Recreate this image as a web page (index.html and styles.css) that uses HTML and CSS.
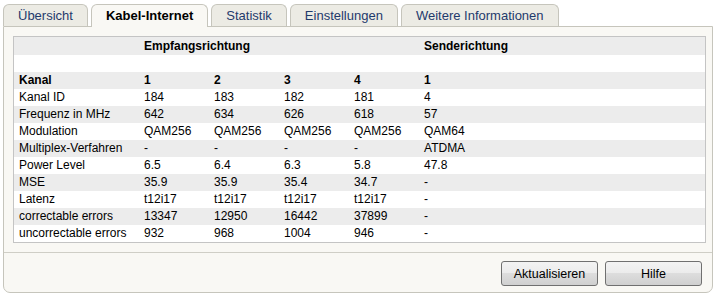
FILE: index.html
```html
<!DOCTYPE html>
<html lang="de">
<head>
  <meta charset="UTF-8" />
  <title>Kabel-Internet</title>
  <link rel="stylesheet" href="styles.css">
</head>
<body>

<div class="tabs">
  <a class="tab" href="#uebersicht">Übersicht</a>
  <a class="tab active" href="#kabel">Kabel-Internet</a>
  <a class="tab" href="#statistik">Statistik</a>
  <a class="tab" href="#einstellungen">Einstellungen</a>
  <a class="tab" href="#info">Weitere Informationen</a>
</div>

<div class="panel">
  <div class="panel-body">
    <table class="channels">
      <colgroup>
        <col class="c-label"><col class="c-val"><col class="c-val"><col class="c-val"><col class="c-val"><col>
      </colgroup>
      <thead>
        <tr class="head"><th></th><th colspan="4">Empfangsrichtung</th><th>Senderichtung</th></tr>
        <tr class="blank"><td colspan="6"></td></tr>
      </thead>
      <tbody>
        <tr class="kanal"><th>Kanal</th><th>1</th><th>2</th><th>3</th><th>4</th><th>1</th></tr>
        <tr><td>Kanal ID</td><td>184</td><td>183</td><td>182</td><td>181</td><td>4</td></tr>
        <tr><td>Frequenz in MHz</td><td>642</td><td>634</td><td>626</td><td>618</td><td>57</td></tr>
        <tr><td>Modulation</td><td>QAM256</td><td>QAM256</td><td>QAM256</td><td>QAM256</td><td>QAM64</td></tr>
        <tr><td>Multiplex-Verfahren</td><td>-</td><td>-</td><td>-</td><td>-</td><td>ATDMA</td></tr>
        <tr><td>Power Level</td><td>6.5</td><td>6.4</td><td>6.3</td><td>5.8</td><td>47.8</td></tr>
        <tr><td>MSE</td><td>35.9</td><td>35.9</td><td>35.4</td><td>34.7</td><td>-</td></tr>
        <tr><td>Latenz</td><td>t12i17</td><td>t12i17</td><td>t12i17</td><td>t12i17</td><td>-</td></tr>
        <tr><td>correctable errors</td><td>13347</td><td>12950</td><td>16442</td><td>37899</td><td>-</td></tr>
        <tr><td>uncorrectable errors</td><td>932</td><td>968</td><td>1004</td><td>946</td><td>-</td></tr>
      </tbody>
    </table>
  </div>
  <div class="panel-foot">
    <button type="button">Aktualisieren</button>
    <button type="button">Hilfe</button>
  </div>
</div>

</body>
</html>
```

FILE: styles.css
```css
body { margin: 0; background: #fff; font-family: "Liberation Sans", Arial, sans-serif; color: #000; }

.tabs { display: flex; align-items: flex-end; gap: 3px; margin: 4px 0 0 3px; }
.tab {
  height: 21px; line-height: 21px; padding: 0 14px;
  border: 1px solid #c6c5bc; border-bottom: none; border-radius: 6px 6px 0 0;
  background: #ecebe4; color: #1f3a6c; font-size: 13px; text-decoration: none;
}
.tab.active {
  position: relative; z-index: 1; height: 22px; margin-bottom: -1px;
  background: #f9f8f4; color: #000; font-weight: bold;
}

.panel {
  margin: 0 5px 0 3px;
  background: #f9f8f4;
  border: 1px solid #c6c5bc; border-radius: 0 0 7px 7px;
}
.panel-body { padding: 9px 6px 9px 9px; border-bottom: 1px solid #cfcec6; }

.channels {
  width: 100%; table-layout: fixed;
  border-collapse: separate; border-spacing: 0;
  border: 1px solid #c4c4c4; background: #fff;
  font-size: 12px;
}
.c-label { width: 125px; }
.c-val { width: 70px; }
.channels th, .channels td { padding: 0 5px; height: 17px; line-height: 17px; text-align: left; white-space: nowrap; }
.channels th { font-weight: bold; }
.channels tr.head th { height: 18px; line-height: 18px; background: #ececec; }
.channels tbody tr:nth-child(odd) { background: #ececec; }

.panel-foot { display: flex; justify-content: flex-end; gap: 7px; padding: 8px 10px 6px; }
.panel-foot button {
  width: 97px; height: 25px;
  border: 1px solid #707070; border-radius: 3px;
  background: linear-gradient(#f3f3f3, #ebebeb 50%, #dddddd 50%, #d0d0d0);
  font-family: "Liberation Sans", Arial, sans-serif; font-size: 12.5px; color: #000;
}
```
